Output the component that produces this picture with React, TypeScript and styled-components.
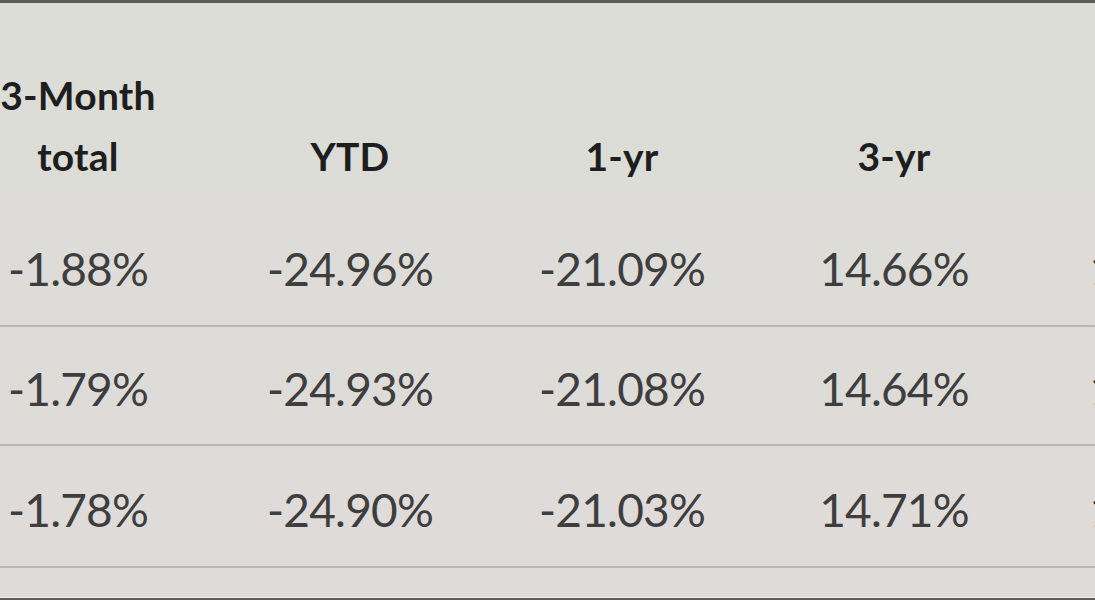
import React from "react";
import styled, { createGlobalStyle } from "styled-components";

const Global = createGlobalStyle`
  html, body { margin: 0; padding: 0; background: #dedcd9; }
  body { font-family: Lato, "Noto Sans", "DejaVu Sans", sans-serif; }
`;

const Frame = styled.div`
  width: 1095px;
  height: 600px;
  box-sizing: border-box;
  overflow: hidden;
  display: flex;
  flex-direction: column;
  border-top: 3px solid #575c57;
  border-bottom: 2px solid #5d5d5d;
  background: linear-gradient(180deg, #dcddd7 0%, #dddcd8 45%, #dfdbda 100%);
`;

const Table = styled.div`
  display: flex;
  flex-direction: column;
  margin-left: -58px;
  width: 1360px;
`;

const HeaderRow = styled.div`
  display: grid;
  grid-template-columns: repeat(4, 272px) 268px;
  align-items: end;
  height: 204px;
  box-sizing: border-box;
  padding-bottom: 20px;
`;

const HeadCell = styled.div`
  text-align: center;
  font-weight: 700;
  font-size: 39px;
  line-height: 61px;
  color: #1e1e1e;
  letter-spacing: 0.2px;
`;

const DataRow = styled.div<{ $h: number; $pad: number }>`
  display: grid;
  grid-template-columns: repeat(4, 272px) 268px;
  height: ${(p) => p.$h}px;
  box-sizing: border-box;
  padding-top: ${(p) => p.$pad}px;
  border-bottom: 2px solid #bab8b7;
`;

const ValueCell = styled.div`
  text-align: center;
  font-weight: 400;
  font-size: 46px;
  line-height: 46px;
  letter-spacing: -0.8px;
  color: #3e3e3e;
`;

const Footer = styled.div`
  flex: 1;
  border-bottom: 1px solid #efefee;
`;

const headers = ["3-Month total", "YTD", "1-yr", "3-yr", "5-yr"];
const rows = [
  { h: 120, pad: 39, v: ["-1.88%", "-24.96%", "-21.09%", "14.66%", "10.31%"] },
  { h: 119, pad: 39, v: ["-1.79%", "-24.93%", "-21.08%", "14.64%", "10.29%"] },
  { h: 122, pad: 41, v: ["-1.78%", "-24.90%", "-21.03%", "14.71%", "10.35%"] },
];

export default function App() {
  return (
    <>
      <Global />
      <Frame>
        <Table>
          <HeaderRow>
            {headers.map((h) => (
              <HeadCell key={h}>
                {h === "3-Month total" ? (
                  <>
                    3-Month
                    <br />
                    total
                  </>
                ) : (
                  h
                )}
              </HeadCell>
            ))}
          </HeaderRow>
          {rows.map((r, i) => (
            <DataRow key={i} $h={r.h} $pad={r.pad}>
              {r.v.map((v, j) => (
                <ValueCell key={j}>{v}</ValueCell>
              ))}
            </DataRow>
          ))}
        </Table>
        <Footer />
      </Frame>
    </>
  );
}
